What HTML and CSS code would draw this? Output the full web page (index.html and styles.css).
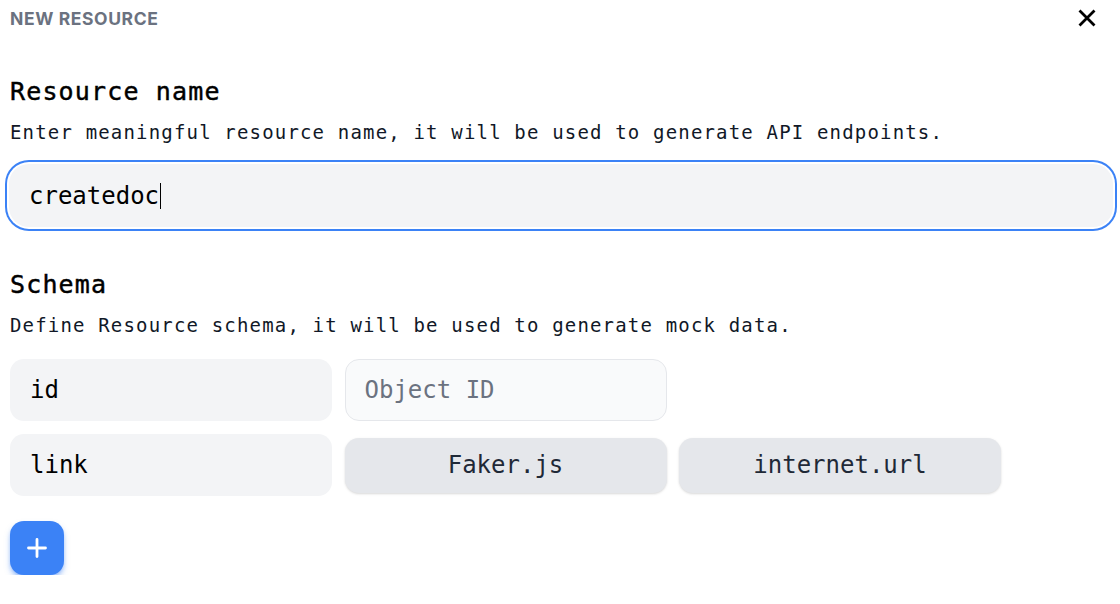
FILE: index.html
```html
<!DOCTYPE html>
<html lang="en">
<head>
<meta charset="utf-8">
<title>New resource</title>
<link rel="stylesheet" href="styles.css">
</head>
<body>
<div class="page">
  <header class="header">
    <span class="title">NEW RESOURCE</span>
    <button class="close" aria-label="Close">
      <svg width="18" height="18" viewBox="0 0 18 18"><path d="M1.5 1.5 L16.5 16.5 M16.5 1.5 L1.5 16.5" stroke="#000" stroke-width="2.8" fill="none"/></svg>
    </button>
  </header>

  <section class="section">
    <h2 class="heading">Resource name</h2>
    <p class="desc">Enter meaningful resource name, it will be used to generate API endpoints.</p>
    <div class="name-input"><span class="value">createdoc</span><span class="caret"></span></div>
  </section>

  <section class="section schema">
    <h2 class="heading">Schema</h2>
    <p class="desc">Define Resource schema, it will be used to generate mock data.</p>
    <div class="rows">
      <div class="row">
        <div class="field">id</div>
        <div class="field placeholder">Object ID</div>
      </div>
      <div class="row">
        <div class="field">link</div>
        <div class="btn">Faker.js</div>
        <div class="btn">internet.url</div>
      </div>
    </div>
    <button class="add" aria-label="Add field">
      <svg width="20" height="20" viewBox="0 0 20 20"><path d="M10 1.5 V18.5 M1.5 10 H18.5" stroke="#fff" stroke-width="2.8" stroke-linecap="round" fill="none"/></svg>
    </button>
  </section>
</div>
</body>
</html>
```

FILE: styles.css
```css
* { box-sizing: border-box; }
html, body { margin: 0; padding: 0; background: #fff; }
body { font-family: "DejaVu Sans Mono", monospace; color: #000; }

.page { padding: 0 7px 0 10px; }

.header {
  height: 36px;
  display: flex;
  align-items: center;
  justify-content: space-between;
  padding-right: 17px;
}
.title {
  font-family: Inter, "Noto Sans", sans-serif;
  font-weight: 700;
  font-size: 17.5px;
  letter-spacing: 0.6px;
  color: #6b7280;
}
.close {
  border: 0; background: none; padding: 0; margin: 0;
  width: 18px; height: 18px; display: flex;
}

.section { margin-top: 40px; }
.section.schema { margin-top: 42px; }

.heading {
  margin: 0;
  font-size: 25px;
  line-height: 32px;
  font-weight: 400;
  letter-spacing: 1.15px;
  color: #000;
  -webkit-text-stroke: 0.45px #000;
}
.desc {
  margin: 10px 0 0;
  font-size: 19px;
  line-height: 28px;
  letter-spacing: 1.17px;
  color: #111827;
}

.name-input {
  margin: 18px 0 0 -1px;
  height: 63px;
  border-radius: 20px;
  background: #f3f4f6;
  box-shadow: 0 0 0 2px #fff, 0 0 0 4px #3b82f6;
  display: flex;
  align-items: center;
  padding-left: 20px;
  font-size: 24px;
  color: #000;
}
.caret {
  display: inline-block;
  width: 1px;
  height: 26px;
  background: #000;
  margin-left: 1px;
}

.rows {
  margin-top: 20px;
  display: flex;
  flex-direction: column;
  gap: 13px;
}
.row {
  display: grid;
  grid-template-columns: repeat(3, 322px);
  column-gap: 12.5px;
  align-items: center;
}
.field {
  height: 62px;
  border-radius: 14px;
  background: #f3f4f6;
  display: flex;
  align-items: center;
  padding-left: 20px;
  font-size: 24px;
  color: #000;
}
.field.placeholder {
  background: #f9fafb;
  border: 1px solid #e5e7eb;
  padding-left: 19px;
  color: #6b7280;
}
.btn {
  height: 55px;
  border-radius: 14px;
  background: #e5e7eb;
  display: flex;
  align-items: center;
  justify-content: center;
  font-size: 24px;
  color: #1f2937;
  box-shadow: 0 1px 3px rgba(0,0,0,0.1), 0 1px 2px rgba(0,0,0,0.06);
}

.add {
  margin-top: 25px;
  width: 54px;
  height: 54px;
  border: 0;
  border-radius: 14px;
  background: #3b82f6;
  display: flex;
  align-items: center;
  justify-content: center;
  padding: 0;
  box-shadow: 0 4px 6px -1px rgba(59,130,246,0.5), 0 2px 4px -2px rgba(59,130,246,0.5);
}
```
